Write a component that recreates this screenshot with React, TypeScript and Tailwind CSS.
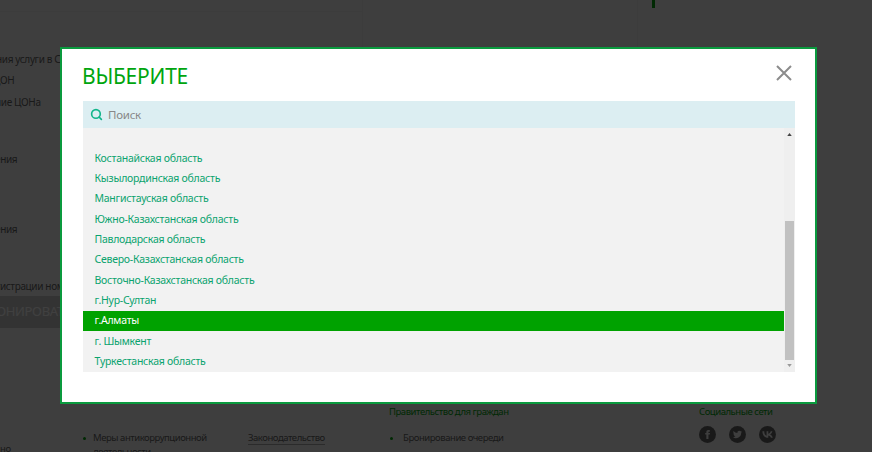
import React from 'react';
import { Search } from 'lucide-react';

const regions = [
    'Костанайская область',
    'Кызылординская область',
    'Мангистауская область',
    'Южно-Казахстанская область',
    'Павлодарская область',
    'Северо-Казахстанская область',
    'Восточно-Казахстанская область',
    'г.Нур-Султан',
    'г.Алматы',
    'г. Шымкент',
    'Туркестанская область',
];

const App = () => {
    return (
        <div className="relative h-[452px] w-[872px] overflow-hidden bg-[#f8f8f8] text-[10.5px] tracking-[-0.25px] text-[#666] font-['Noto_Sans',sans-serif]">
            {/* Page behind the modal */}
            <div className="flex h-[400px]">
                <div className="w-[362px] whitespace-nowrap text-[10px] tracking-[-0.35px]">
                    <div className="h-[12px] border-b border-[#f0f0f0]" />
                    <div className="mt-[39px] -ml-[69px] h-[16px] leading-[16px]">Условия оказания услуги в Спец ЦОН</div>
                    <div className="mt-[5px] -ml-[7px] h-[16px] leading-[16px]">ЦОН</div>
                    <div className="mt-[6px] -ml-[5px] h-[16px] leading-[16px]">ние ЦОНа</div>
                    <div className="mt-[41px] -ml-[5px] h-[16px] leading-[16px]">ения</div>
                    <div className="mt-[54px] -ml-[5px] h-[16px] leading-[16px]">ения</div>
                    <div className="mt-[41px] -ml-[15px] h-[16px] leading-[16px]">регистрации номера</div>
                    <div className="mt-[2px] -ml-[60px] flex h-[32px] w-[180px] items-center bg-[#ccc] pl-[26px] text-[13px] text-white">ЗАБРОНИРОВАТЬ</div>
                </div>
                <div className="w-[276px] border-x border-[#f0f0f0]" />
                <div className="ml-[14px] h-[8px] w-[3px] bg-[#00a50e]" />
            </div>

            {/* Footer */}
            <div className="flex h-[52px] whitespace-nowrap text-[9.5px] tracking-[-0.45px]">
                <div className="relative w-[248px] pl-[83px] pt-[31px]">
                    <div className="flex items-center gap-[7px] leading-[14px]">
                        <span className="size-[3px] rounded-full bg-[#00a50e]" />
                        Меры антикоррупционной
                    </div>
                    <div className="pl-[10px] leading-[14px]">деятельности</div>
                    <span className="absolute bottom-[-4px] left-0 leading-[14px]">но</span>
                </div>
                <div className="w-[141px] pt-[31px]">
                    <span className="border-b border-[#aaa] leading-[14px]">Законодательство</span>
                </div>
                <div className="w-[310px] pt-[5px]">
                    <div className="leading-[14px] text-[#00a50e]">Правительство для граждан</div>
                    <div className="mt-[12px] flex items-center gap-[10px] pl-[1px] leading-[14px]">
                        <span className="size-[3px] rounded-full bg-[#00a50e]" />
                        Бронирование очереди
                    </div>
                </div>
                <div className="pt-[5px]">
                    <div className="leading-[14px] text-[#00a50e]">Социальные сети</div>
                    <div className="mt-[7px] flex gap-[13px]">
                        <span className="flex size-[17px] items-center justify-center rounded-full bg-[#666]">
                            <svg viewBox="0 0 24 24" className="size-[11px] fill-[#f8f8f8]"><path d="M14 8.5V6.8c0-.8.5-1 1-1h2V2h-3c-3 0-4.500 2-4.500 4.500v2H7V12h2.500v10H14V12h3l.5-3.500z" /></svg>
                        </span>
                        <span className="flex size-[17px] items-center justify-center rounded-full bg-[#666]">
                            <svg viewBox="0 0 24 24" className="size-[11px] fill-[#f8f8f8]"><path d="M22 5.800c-.7.300-1.500.5-2.400.6.900-.5 1.500-1.300 1.800-2.300-.8.500-1.700.8-2.600 1a4.100 4.100 0 0 0-7 3.700C8.400 8.600 5.400 7 3.400 4.500c-1.100 1.900-.5 4.300 1.300 5.500-.7 0-1.300-.2-1.900-.5 0 2 1.400 3.700 3.300 4.100-.6.200-1.200.2-1.900.1.500 1.600 2 2.800 3.800 2.800A8.300 8.300 0 0 1 2 18.200 11.600 11.600 0 0 0 20 7.800c.8-.5 1.500-1.200 2-2z" /></svg>
                        </span>
                        <span className="flex size-[17px] items-center justify-center rounded-full bg-[#666]">
                            <svg viewBox="0 0 24 24" className="size-[13px] fill-[#f8f8f8]"><path d="M13 18C6.500 18 2.800 13.500 2.600 6h3.300c.1 5.500 2.500 7.800 4.400 8.300V6h3.100v4.700c1.900-.2 3.900-2.400 4.600-4.700h3.100a9.200 9.200 0 0 1-4.200 6 9.500 9.500 0 0 1 4.900 6h-3.400a6 6 0 0 0-5-4.300V18z" /></svg>
                        </span>
                    </div>
                </div>
            </div>

            {/* Overlay */}
            <div className="absolute inset-0 bg-black/75" />

            {/* Modal */}
            <div className="absolute left-[60px] top-[47px] w-[757px] border-2 border-[#0a9a3e] bg-white pb-[30px] pl-[21px] pr-[20px]">
                <div className="flex h-[52px] items-center justify-between">
                    <h2 className="-ml-[1px] mt-[3px] text-[21px] leading-none tracking-[-0.25px] text-[#00a50e]">ВЫБЕРИТЕ</h2>
                    <svg viewBox="0 0 16 16" className="mr-[3px] -mt-[4px] size-[16px] stroke-[#8c8c8c] stroke-2" fill="none">
                        <path d="M1 1l14 14M15 1L1 15" />
                    </svg>
                </div>

                <div className="flex h-[27px] items-center gap-[5px] bg-[#dceef2] pl-[7px] text-[11.5px] text-[#888]">
                    <Search className="size-[13px] text-[#10b58a]" strokeWidth={3} />
                    Поиск
                </div>

                <div className="flex h-[244px] bg-[#f2f2f2]">
                    <ul className="flex-1 pt-[20.5px]">
                        {regions.map((region) => (
                            <li
                                key={region}
                                className={region === 'г.Алматы'
                                    ? 'flex h-[20.33px] items-center bg-[#00a200] pl-[11.5px] text-white'
                                    : 'flex h-[20.33px] items-center pl-[11.5px] text-[#0aa36e]'}
                            >
                                {region}
                            </li>
                        ))}
                    </ul>

                    {/* Scrollbar */}
                    <div className="relative w-[11px] bg-[#efefef]">
                        <svg viewBox="0 0 6 4" className="absolute left-[3px] top-[5px] h-[3px] w-[5px] fill-[#444]"><path d="M3 0l3 4H0z" /></svg>
                        <div className="absolute left-[1px] top-[93px] h-[139px] w-[9px] bg-[#c1c1c1]" />
                        <svg viewBox="0 0 6 4" className="absolute bottom-[5px] left-[3px] h-[3px] w-[5px] fill-[#999]"><path d="M0 0h6L3 4z" /></svg>
                    </div>
                </div>
            </div>
        </div>
    );
};

export default App;
